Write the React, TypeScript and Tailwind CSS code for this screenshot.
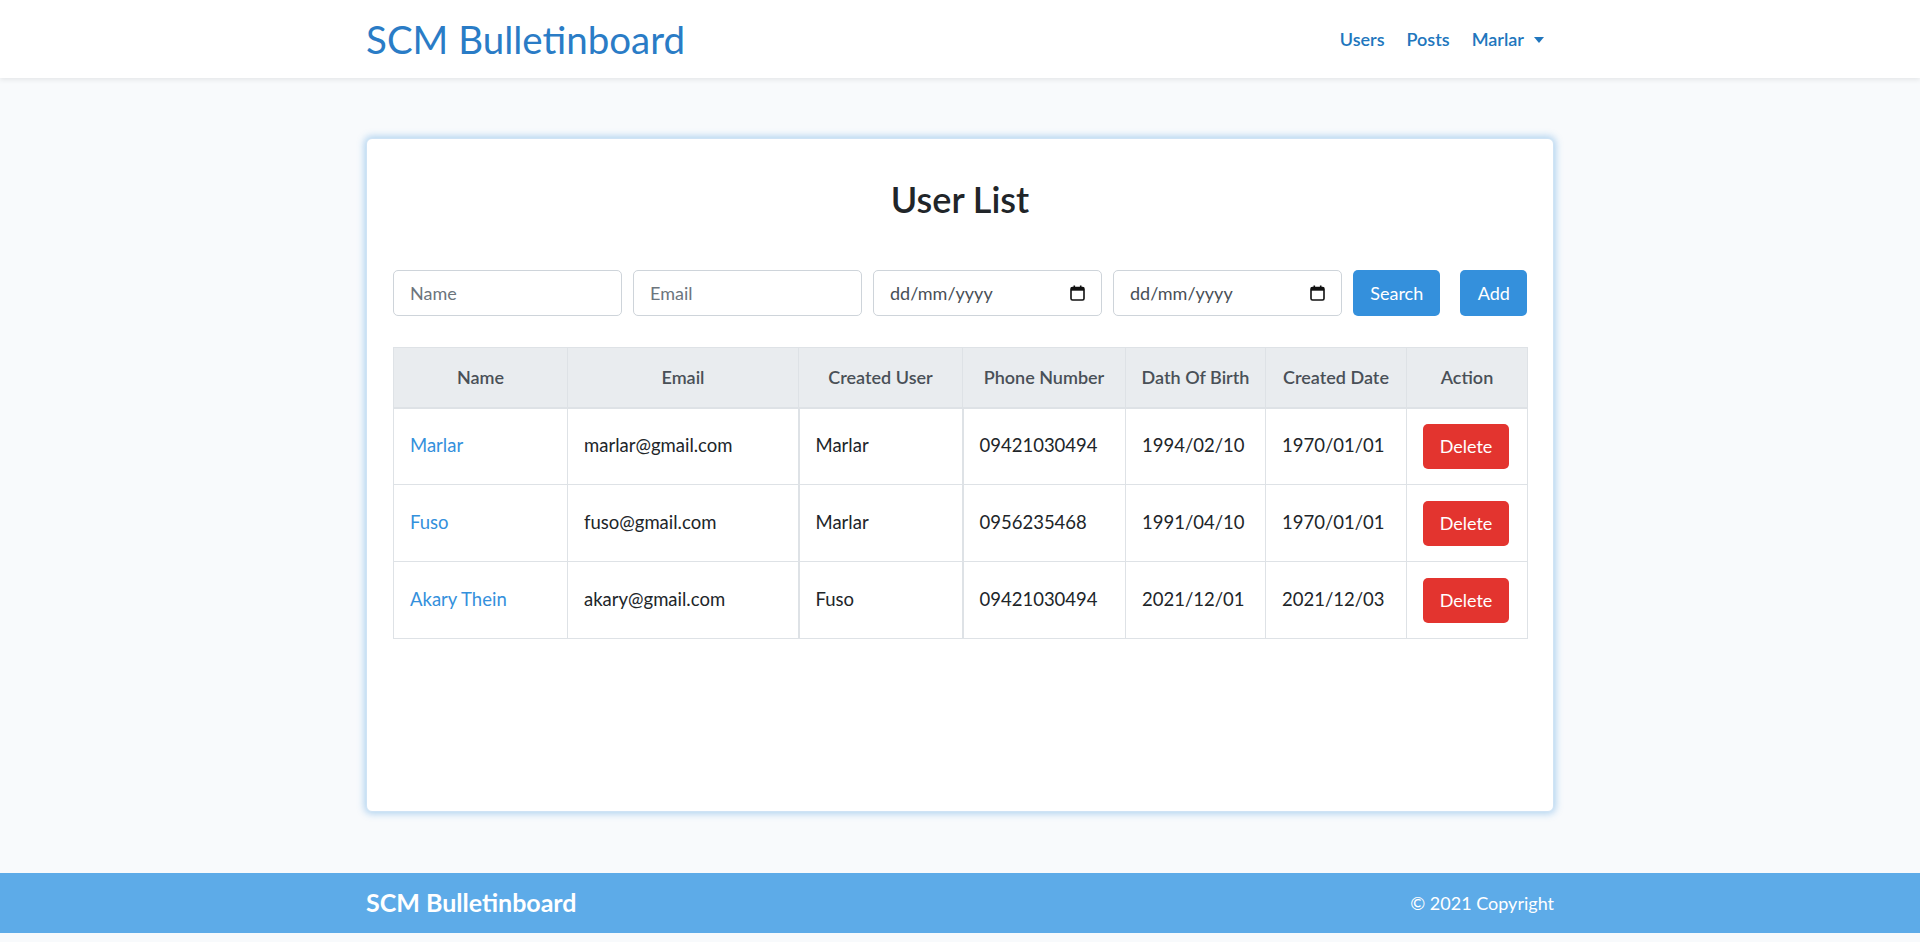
const users = [
  { name: 'Marlar', email: 'marlar@gmail.com', createdUser: 'Marlar', phone: '09421030494', dob: '1994/02/10', created: '1970/01/01' },
  { name: 'Fuso', email: 'fuso@gmail.com', createdUser: 'Marlar', phone: '0956235468', dob: '1991/04/10', created: '1970/01/01' },
  { name: 'Akary Thein', email: 'akary@gmail.com', createdUser: 'Fuso', phone: '09421030494', dob: '2021/12/01', created: '2021/12/03' },
]

const headers = ['Name', 'Email', 'Created User', 'Phone Number', 'Dath Of Birth', 'Created Date', 'Action']
const widths = [174, 231, 164, 163, 140, 141, 121]

function CalendarIcon() {
  return (
    <svg width="15" height="16" viewBox="0 0 15 16" fill="none">
      <rect x="1" y="2.5" width="13" height="12.5" rx="1.5" stroke="#111" strokeWidth="1.6" />
      <rect x="1" y="2.5" width="13" height="3.2" fill="#111" />
      <rect x="3.5" y="0.5" width="1.6" height="3" fill="#111" />
      <rect x="9.9" y="0.5" width="1.6" height="3" fill="#111" />
    </svg>
  )
}

function DateField() {
  return (
    <div className="flex h-[46px] w-[229px] items-center justify-between rounded-[5px] border border-[#ced4da] bg-white pl-[16px] pr-[16px] text-[18px] text-[#495057]">
      <span>dd/mm/yyyy</span>
      <CalendarIcon />
    </div>
  )
}

export default function App() {
  return (
    <div className="min-h-[942px] bg-[#f8fafc] font-['Lato','Noto_Sans',sans-serif] text-[18px] text-[#212529]">
      <nav className="bg-white shadow-[0_2px_5px_rgba(0,0,0,0.08)]">
        <div className="mx-auto flex h-[78px] w-[1188px] items-center justify-between">
          <span className="text-[38.5px] leading-none text-[#2a7cc6]">SCM Bulletinboard</span>
          <div className="mr-[10px] flex items-center gap-[22px] text-[18px] font-semibold text-[#2176bd]">
            <span>Users</span>
            <span>Posts</span>
            <span className="flex items-center gap-[10px]">
              Marlar
              <span className="mt-[2px] h-0 w-0 border-x-[5px] border-t-[6px] border-x-transparent border-t-[#2176bd]" />
            </span>
          </div>
        </div>
      </nav>

      <main className="pt-[60px]">
        <div className="mx-auto h-[674px] w-[1188px] rounded-[6px] border border-[#cfe3f5] bg-white px-[26px] shadow-[0_0_7px_2px_rgba(52,144,220,0.35)]">
          <h2 className="pt-[36px] text-center text-[36px] font-semibold leading-[48px] text-[#212529]">User List</h2>

          <div className="mt-[47px] flex items-center">
            <div className="flex gap-[11px]">
              <input
                placeholder="Name"
                className="h-[46px] w-[229px] rounded-[5px] border border-[#ced4da] bg-white px-[16px] text-[18px] placeholder:text-[#6c757d]"
              />
              <input
                placeholder="Email"
                className="h-[46px] w-[229px] rounded-[5px] border border-[#ced4da] bg-white px-[16px] text-[18px] placeholder:text-[#6c757d]"
              />
              <DateField />
              <DateField />
            </div>
            <button className="ml-[11px] h-[46px] w-[88px] rounded-[5px] bg-[#3490dc] text-[18px] text-white">Search</button>
            <button className="ml-[20px] h-[46px] w-[67px] rounded-[5px] bg-[#3490dc] text-[18px] text-white">Add</button>
          </div>

          <table className="mt-[31px] w-[1134px] table-fixed border-collapse text-[18.5px]">
            <colgroup>
              {widths.map((w, i) => (
                <col key={i} style={{ width: w }} />
              ))}
            </colgroup>
            <thead>
              <tr className="h-[60px] bg-[#e9ecef]">
                {headers.map((h) => (
                  <th key={h} className="border border-b-2 border-[#dee2e6] text-center text-[18px] font-semibold text-[#495057]">
                    {h}
                  </th>
                ))}
              </tr>
            </thead>
            <tbody>
              {users.map((u) => (
                <tr key={u.name} className="h-[77px]">
                  <td className="border border-[#dee2e6] px-[16px] text-[#3490dc]">{u.name}</td>
                  <td className="border border-[#dee2e6] px-[16px]">{u.email}</td>
                  <td className="border border-l-2 border-[#dee2e6] px-[16px]">{u.createdUser}</td>
                  <td className="border border-l-2 border-[#dee2e6] px-[16px]">{u.phone}</td>
                  <td className="border border-[#dee2e6] px-[16px]">{u.dob}</td>
                  <td className="border border-[#dee2e6] px-[16px]">{u.created}</td>
                  <td className="border border-[#dee2e6] px-[16px]">
                    <button className="h-[45px] w-[86px] rounded-[5px] bg-[#e3342f] text-[18px] text-white">Delete</button>
                  </td>
                </tr>
              ))}
            </tbody>
          </table>
        </div>
      </main>

      <footer className="mt-[61px] bg-[#5dabe8]">
        <div className="mx-auto flex h-[60px] w-[1188px] items-center justify-between text-white">
          <span className="text-[25px] font-bold">SCM Bulletinboard</span>
          <span className="text-[18px]">© 2021 Copyright</span>
        </div>
      </footer>
    </div>
  )
}
